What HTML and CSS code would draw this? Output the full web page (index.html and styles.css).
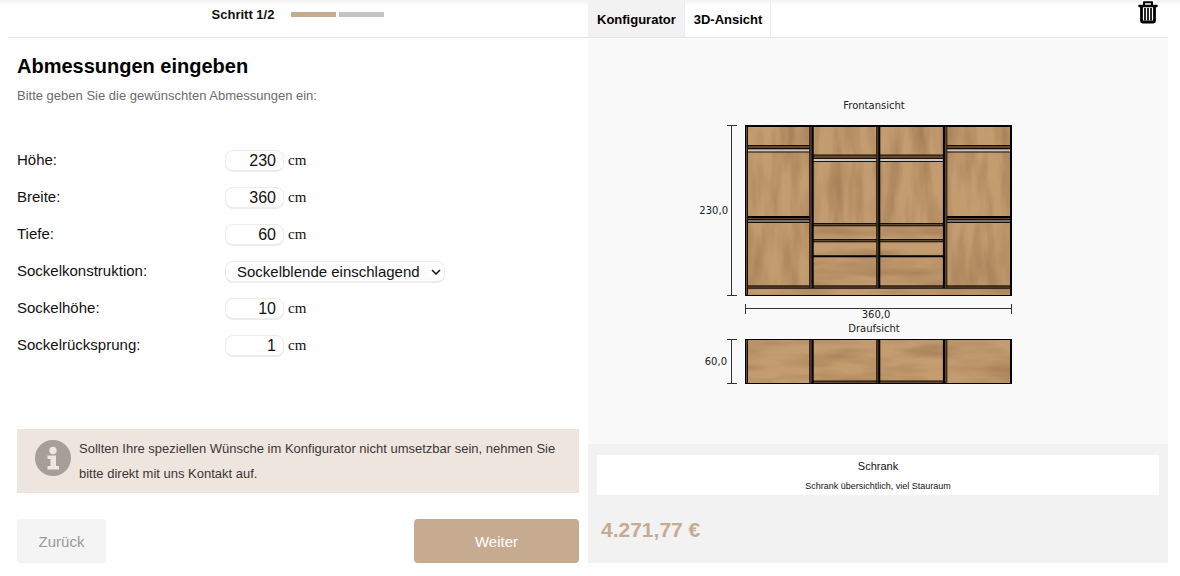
FILE: index.html
```html
<!DOCTYPE html>
<html lang="de">
<head>
    <meta charset="UTF-8">
    <meta name="viewport" content="width=device-width, initial-scale=1.0">
    <title>Schrank Konfigurator</title>
    <link rel="stylesheet" href="styles.css">
</head>
<body>
    <div class="configurator">
        <main class="form-panel">
            <header class="steps">
                <span class="step-label">Schritt 1/2</span>
                <span class="step-bar active"></span>
                <span class="step-bar"></span>
            </header>

            <form class="form-content">
                <h1>Abmessungen eingeben</h1>
                <p class="intro">Bitte geben Sie die gewünschten Abmessungen ein:</p>

                <div class="fields">
                    <div class="field">
                        <label for="hoehe">Höhe:</label>
                        <input type="text" id="hoehe" value="230">
                        <span class="unit">cm</span>
                    </div>
                    <div class="field">
                        <label for="breite">Breite:</label>
                        <input type="text" id="breite" value="360">
                        <span class="unit">cm</span>
                    </div>
                    <div class="field">
                        <label for="tiefe">Tiefe:</label>
                        <input type="text" id="tiefe" value="60">
                        <span class="unit">cm</span>
                    </div>
                    <div class="field">
                        <label for="sockel">Sockelkonstruktion:</label>
                        <div class="select-wrap">
                            <select id="sockel">
                                <option>Sockelblende einschlagend</option>
                            </select>
                            <svg class="chevron" width="10" height="6" viewBox="0 0 10 6"><path d="M1 1l4 4 4-4" fill="none" stroke="#111" stroke-width="1.5"/></svg>
                        </div>
                    </div>
                    <div class="field">
                        <label for="sockelhoehe">Sockelhöhe:</label>
                        <input type="text" id="sockelhoehe" value="10">
                        <span class="unit">cm</span>
                    </div>
                    <div class="field">
                        <label for="ruecksprung">Sockelrücksprung:</label>
                        <input type="text" id="ruecksprung" value="1">
                        <span class="unit">cm</span>
                    </div>
                </div>

                <div class="info-box">
                    <svg class="info-icon" width="36" height="36" viewBox="0 0 36 36">
                        <circle cx="18" cy="18" r="18" fill="#a79e98"/>
                        <circle cx="18" cy="10.500" r="3.700" fill="#efe6e0"/>
                        <path d="M12.500 15.500h8.500v10.500h3v3.500h-11.500v-3.500h3v-7h-3z" fill="#efe6e0"/>
                    </svg>
                    <p>Sollten Ihre speziellen Wünsche im Konfigurator nicht umsetzbar sein, nehmen Sie bitte direkt mit uns Kontakt auf.</p>
                </div>

                <div class="buttons">
                    <button type="button" class="back">Zurück</button>
                    <button type="button" class="next">Weiter</button>
                </div>
            </form>
        </main>

        <section class="preview-panel">
            <nav class="tabs">
                <button type="button" class="tab selected">Konfigurator</button>
                <button type="button" class="tab">3D-Ansicht</button>
                <button type="button" class="trash" aria-label="Löschen">
                    <svg width="20" height="24" viewBox="0 0 20 24">
                        <path d="M6 6V2.200h8V6" fill="none" stroke="#000" stroke-width="2" stroke-linejoin="round"/>
                        <path d="M1.500 6h17" stroke="#000" stroke-width="2.600" stroke-linecap="round"/>
                        <path d="M3.500 6.500v14.500q0 1 1 1h11q1 0 1-1V6.500" fill="none" stroke="#000" stroke-width="2.800"/>
                        <path d="M7 8v12.500M10 8v12.500M13 8v12.500" stroke="#000" stroke-width="1.700"/>
                    </svg>
                </button>
            </nav>

            <div class="drawing">
                <svg width="380" height="300" viewBox="0 0 380 300">
                    <defs>
                        <filter id="grainV" x="0" y="0" width="100%" height="100%" color-interpolation-filters="sRGB">
                            <feTurbulence type="fractalNoise" baseFrequency="0.07 0.014" numOctaves="3" seed="7"/>
                            <feColorMatrix values="0 0 0 0 0.46  0 0 0 0 0.31  0 0 0 0 0.18  0.7 0 0 0 -0.25"/>
                        </filter>
                        <filter id="grainH" x="0" y="0" width="100%" height="100%" color-interpolation-filters="sRGB">
                            <feTurbulence type="fractalNoise" baseFrequency="0.014 0.07" numOctaves="3" seed="3"/>
                            <feColorMatrix values="0 0 0 0 0.46  0 0 0 0 0.31  0 0 0 0 0.18  0.7 0 0 0 -0.25"/>
                        </filter>
                        <g id="outerColumn">
                            <path class="board" d="M0 50h64v5H0z"/>
                            <path class="rail" d="M0 55.500h64"/>
                            <path class="edge" d="M0 50.500h64M0 53.500h64M0 57h64"/>
                            <path class="board" d="M0 122h64v3H0z"/>
                            <path class="rail dark" d="M0 126h64"/>
                            <path class="edge thick" d="M0 122h64"/>
                            <path class="edge" d="M0 124.500h64M0 127.500h64"/>
                        </g>
                        <g id="innerColumn">
                            <path class="board" d="M0 60h64v4H0zM0 128h64v3H0zM0 144h64v3H0z"/>
                            <path class="rail" d="M0 65h64"/>
                            <path class="edge" d="M0 60h64M0 63.500h64M0 66.500h64M0 128.500h64M0 130.800h64M0 144.500h64M0 146.800h64"/>
                            <path class="edge thick" d="M0 161.300h64"/>
                        </g>
                    </defs>

                    <!-- Frontansicht -->
                    <text x="186" y="14" text-anchor="middle">Frontansicht</text>
                    <rect class="wood" x="57" y="30" width="267" height="171"/>
                    <rect x="57" y="30" width="267" height="98" filter="url(#grainV)"/>
                    <rect x="57" y="128" width="67" height="63" filter="url(#grainV)"/>
                    <rect x="124" y="128" width="133" height="63" filter="url(#grainH)"/>
                    <rect x="257" y="128" width="67" height="63" filter="url(#grainV)"/>
                    <rect x="57" y="193" width="267" height="8" filter="url(#grainH)"/>
                    <use href="#outerColumn" x="59"/>
                    <use href="#innerColumn" x="125"/>
                    <use href="#innerColumn" x="192"/>
                    <use href="#outerColumn" x="259"/>
                    <path class="board" d="M58 190.500h265v3H58z"/>
                    <path class="edge" d="M58 191h265M58 193.200h265"/>
                    <path class="board" d="M57 30h3v171h-3zM121.500 30h3v163h-3zM188.500 30h3v163h-3zM255.500 30h3v163h-3z"/>
                    <path class="edge" d="M59.500 30v170M121.800 30v163M188.800 30v163M258.800 30v163"/>
                    <path class="edge thick" d="M124.700 30v163M191.300 30v163M255.900 30v163M323 30v171M57 31h267"/>
                    <rect class="edge outline" x="57.500" y="30.500" width="266" height="170"/>

                    <!-- Draufsicht -->
                    <text x="188" y="223" text-anchor="middle">360,0</text>
                    <text x="186" y="237" text-anchor="middle">Draufsicht</text>
                    <rect class="wood" x="57" y="244" width="267" height="45"/>
                    <rect x="57" y="244" width="267" height="45" filter="url(#grainH)"/>
                    <path class="board" d="M125 286h130v3H125zM57 244h3v45h-3zM121.500 244h3v45h-3zM188.500 244h3v45h-3zM255.500 244h3v45h-3z"/>
                    <path class="edge" d="M125 286h130M59.500 244v45M121.800 244v45M188.800 244v45M258.800 244v45"/>
                    <path class="edge thick" d="M124.700 244v45M191.300 244v45M255.900 244v45M323 244v45"/>
                    <rect class="edge outline" x="57.500" y="244.500" width="266" height="44"/>

                    <!-- Bemaßung -->
                    <path class="dimension" d="M39 30.500h10M43.500 30.500v170M39 200.500h10M39 244.500h10M43.500 244.500v44M39 288.500h10M57.500 209v10M57.500 213.500h266M323.500 209v10"/>
                    <text x="40" y="119" text-anchor="end">230,0</text>
                    <text x="39" y="270" text-anchor="end">60,0</text>
                </svg>
            </div>

            <div class="summary">
                <div class="product">
                    <h2>Schrank</h2>
                    <p>Schrank übersichtlich, viel Stauraum</p>
                </div>
                <div class="price">4.271,77 €</div>
            </div>
        </section>
    </div>
</body>
</html>
```
FILE: styles.css
```css
* {
    box-sizing: border-box;
}
body {
    margin: 0;
    padding: 0 12px 12px 8px;
    min-height: 100vh;
    font-family: "Liberation Sans", Arial, sans-serif;
    color: #111;
    background: linear-gradient(to bottom, #f3f3f3, #fff 6px);
}
h1, h2, p {
    margin: 0;
    font-weight: normal;
}
button, input, select {
    font-family: inherit;
}
button {
    border: none;
    cursor: pointer;
}
.configurator {
    display: grid;
    grid-template-columns: 1fr 1fr;
}

/* left side */
.steps {
    display: flex;
    align-items: center;
    justify-content: center;
    gap: 3px;
    height: 38px;
    padding-bottom: 8px;
    border-bottom: 1px solid #e4e4e4;
}
.step-label {
    margin-right: 14px;
    font-size: 13px;
    font-weight: bold;
}
.step-bar {
    width: 45px;
    height: 5px;
    background: #c4c4c4;
}
.step-bar.active {
    background: #c7ab91;
}
.form-content {
    padding: 16px 9px 0;
}
h1 {
    font-size: 20px;
    line-height: 24px;
    font-weight: bold;
    color: #000;
}
.intro {
    margin-top: 9px;
    font-size: 13px;
    line-height: 18px;
    color: #6c6c6c;
}
.fields {
    display: grid;
    gap: 15px;
    margin-top: 45px;
}
.field {
    display: flex;
    align-items: center;
    height: 22px;
}
.field label {
    width: 208px;
    padding-bottom: 3px;
    font-size: 15px;
}
.field input, .field select {
    height: 22px;
    border: 1px solid #ececec;
    border-bottom-width: 2px;
    border-radius: 8px;
    background: #fff;
    font-size: 15px;
    color: #111;
}
.field input {
    width: 59px;
    padding: 0 7px;
    font-size: 16px;
    text-align: right;
}
.unit {
    margin-left: 4px;
    padding-bottom: 2px;
    font-family: "Liberation Serif", "Times New Roman", serif;
    font-size: 15px;
}
.select-wrap {
    position: relative;
}
.field select {
    width: 220px;
    padding: 0 24px 0 11px;
    appearance: none;
}
.chevron {
    position: absolute;
    top: 8px;
    right: 4px;
    pointer-events: none;
}
.info-box {
    display: flex;
    align-items: center;
    gap: 8px;
    min-height: 64px;
    margin-top: 72px;
    padding: 6px 18px;
    background: #efe5df;
}
.info-icon {
    flex: none;
    margin-bottom: 6px;
}
.info-box p {
    font-size: 13px;
    line-height: 25px;
    color: #3c3734;
}
.buttons {
    display: flex;
    justify-content: space-between;
    margin-top: 26px;
}
.buttons button {
    height: 44px;
    border-radius: 4px;
    font-size: 15px;
}
.back {
    width: 89px;
    background: #f4f4f4;
    color: #999;
}
.next {
    width: 165px;
    background: #c7ab91;
    color: #fff;
}

/* right side */
.preview-panel {
    display: flex;
    flex-direction: column;
    background: #f2f2f2;
}
.tabs {
    display: flex;
    height: 38px;
    background: linear-gradient(to bottom, #f3f3f3, #fff 6px);
    border-bottom: 1px solid #e4e4e4;
}
.tab {
    padding: 2px 8px 0 9px;
    border-right: 1px solid #ececec;
    background: none;
    font-size: 13px;
    font-weight: bold;
    color: #000;
}
.tab.selected {
    background: #f2f2f2;
}
.trash {
    align-self: flex-start;
    margin-left: auto;
    padding: 0 10px;
    background: none;
}
.trash svg {
    display: block;
}
.drawing {
    display: flex;
    justify-content: center;
    padding: 57px 0 49px;
    background: #f9f9f9;
}
.drawing text {
    font-family: "DejaVu Sans", sans-serif;
    font-size: 10px;
    fill: #222;
}
.wood {
    fill: #c39c70;
}
.board {
    fill: #62462d;
}
.rail {
    stroke: #c9c9c9;
    stroke-width: 2;
}
.rail.dark {
    stroke: #7c6f64;
}
.edge {
    fill: none;
    stroke: #17100a;
    stroke-width: 1;
}
.thick, .outline {
    stroke: #000;
    stroke-width: 2;
}
.outline {
    stroke-width: 1;
}
.dimension {
    fill: none;
    stroke: #333;
}
.summary {
    padding: 11px 9px 21px;
}
.product {
    padding: 3px 0;
    background: #fff;
    text-align: center;
}
.product h2 {
    font-size: 11px;
    line-height: 16px;
}
.product p {
    margin-top: 6px;
    font-size: 9px;
    line-height: 12px;
}
.price {
    margin-top: 22px;
    padding: 0 4px;
    font-size: 21px;
    line-height: 25px;
    font-weight: bold;
    color: #c7ab91;
}
```
